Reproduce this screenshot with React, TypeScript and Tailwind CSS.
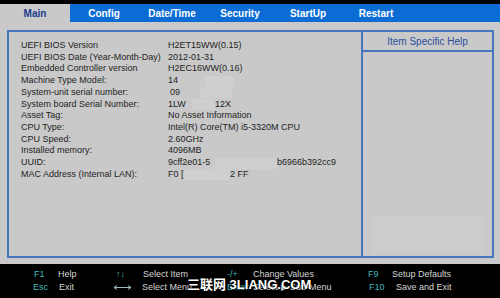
import React from "react";

const rows: { label: string; value: React.ReactNode }[] = [
  { label: "UEFI BIOS Version", value: "H2ET15WW(0.15)" },
  { label: "UEFI BIOS Date (Year-Month-Day)", value: "2012-01-31" },
  { label: "Embedded Controller version", value: "H2EC16WW(0.16)" },
  {
    label: "Machine Type Model:",
    value: (
      <span className="flex items-center">
        <span className="w-[37px]">14</span>
        <span className="inline-block h-[11px] w-[28px] bg-[#cfcfcf]" />
      </span>
    ),
  },
  {
    label: "System-unit serial number:",
    value: (
      <span className="flex items-center">
        <span className="w-[32px] pl-[2px]">09</span>
        <span className="inline-block h-[11px] w-[32px] bg-[#cfcfcf]" />
      </span>
    ),
  },
  {
    label: "System board Serial Number:",
    value: (
      <span className="flex items-center">
        <span className="w-[24px]">1LW</span>
        <span className="inline-block h-[11px] w-[23px] bg-[#cfcfcf]" />
        <span>12X</span>
      </span>
    ),
  },
  { label: "Asset Tag:", value: "No Asset Information" },
  { label: "CPU Type:", value: "Intel(R) Core(TM) i5-3320M CPU" },
  { label: "CPU Speed:", value: "2.60GHz" },
  { label: "Installed memory:", value: "4096MB" },
  {
    label: "UUID:",
    value: (
      <span className="flex items-center">
        <span className="w-[47px]">9cff2e01-5</span>
        <span className="inline-block h-[11px] w-[62px] bg-[#cfcfcf]" />
        <span>b6966b392cc9</span>
      </span>
    ),
  },
  {
    label: "MAC Address (Internal LAN):",
    value: (
      <span className="flex items-center">
        <span className="w-[16px]">F0 [</span>
        <span className="inline-block h-[11px] w-[46px] bg-[#cfcfcf]" />
        <span>2 FF</span>
      </span>
    ),
  },
];

const tabs = ["Main", "Config", "Date/Time", "Security", "StartUp", "Restart"];

function LongArrow() {
  return (
    <svg width="19" height="7" viewBox="0 0 19 7" className="inline-block">
      <line x1="1" y1="3.5" x2="18" y2="3.5" stroke="#9fb8c0" strokeWidth="1" />
      <path d="M1 3.5 L4 1.5 M1 3.5 L4 5.5" stroke="#9fb8c0" strokeWidth="1" fill="none" />
      <path d="M18 3.5 L15 1.5 M18 3.5 L15 5.5" stroke="#9fb8c0" strokeWidth="1" fill="none" />
    </svg>
  );
}

export default function App() {
  return (
    <div
      className="relative flex h-[298px] w-[500px] flex-col overflow-hidden bg-[#c9c9c9]"
      style={{ fontFamily: '"Liberation Sans", Arial, sans-serif' }}
    >
      <div className="h-[4px] bg-black" />
      <div className="flex h-[18px] items-center bg-[#0a6cd4] text-[10px] font-bold">
        {tabs.map((t, i) => (
          <div
            key={t}
            className={
              i === 0
                ? "flex h-full w-[70px] items-center justify-center bg-[#c9c9c9] text-[#1b3c8c]"
                : "flex h-full w-[68px] items-center justify-center text-white"
            }
          >
            {t}
          </div>
        ))}
      </div>

      <div className="ml-[7px] mr-[6px] mt-[8px] flex h-[228px] border-2 border-[#4677bd]">
        <div className="w-[352px] pl-[12px] pt-[8px] text-[9px] leading-[11.73px] text-[#1e1e1e]">
          {rows.map((r) => (
            <div key={r.label} className="flex h-[11.73px] items-center">
              <span className="w-[147px] shrink-0 whitespace-nowrap">{r.label}</span>
              <span className="whitespace-nowrap">{r.value}</span>
            </div>
          ))}
        </div>
        <div className="flex flex-1 flex-col border-l-2 border-[#4677bd]">
          <div className="flex h-[20px] items-center justify-center border-b-2 border-[#4677bd] text-[10px] text-[#2a4f9c]">
            Item Specific Help
          </div>
          <div className="flex-1" />
          <div className="mx-[8px] mb-[3px] h-[37px] bg-[#cccccc]" />
        </div>
      </div>

      <div className="mt-auto flex h-[34px] flex-col justify-center gap-[2px] bg-black text-[9px] leading-[11px] text-[#d6d6d6]">
        <div className="flex items-center pl-[34px]">
          <span className="w-[24px] text-[#3fb5b5]">F1</span>
          <span className="w-[58px]">Help</span>
          <span className="w-[27px] text-[#3fb5b5]">↑↓</span>
          <span className="w-[84px]">Select Item</span>
          <span className="w-[26px] text-[#3fb5b5]">-/+</span>
          <span className="w-[115px]">Change Values</span>
          <span className="w-[24px] text-[#3fb5b5]">F9</span>
          <span>Setup Defaults</span>
        </div>
        <div className="flex items-center pl-[33px]">
          <span className="w-[26px] text-[#3fb5b5]">Esc</span>
          <span className="w-[54px]">Exit</span>
          <span className="flex w-[29px] items-center">
            <LongArrow />
          </span>
          <span className="w-[85px]">Select Menu</span>
          <span className="w-[26px] text-[#3fb5b5]">Enter</span>
          <span className="w-[116px]">Select ▶ Sub-Menu</span>
          <span className="w-[27px] text-[#3fb5b5]">F10</span>
          <span>Save and Exit</span>
        </div>
      </div>

      <div
        className="absolute left-[187px] top-[278px] whitespace-nowrap text-[13px] font-bold leading-[14px] text-white"
        style={{
          fontFamily: '"Liberation Sans", "Noto Sans CJK SC", sans-serif',
          textShadow: "0 0 1px #000, 0 0 1px #000",
        }}
      >
        三联网 3LIANG.COM
      </div>
    </div>
  );
}
